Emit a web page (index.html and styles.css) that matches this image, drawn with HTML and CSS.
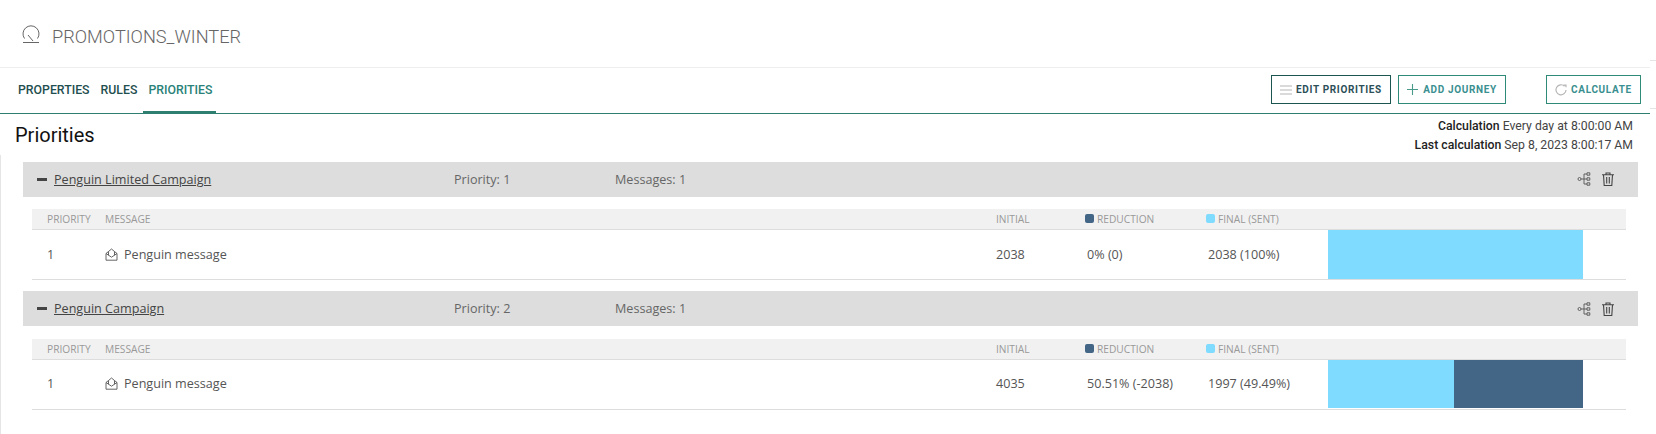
FILE: index.html
```html
<!DOCTYPE html>
<html lang="en">
<head>
    <meta charset="UTF-8">
    <title>PROMOTIONS_WINTER</title>
    <link rel="stylesheet" href="styles.css">
</head>
<body>
    <header class="title-bar">
        <svg class="title-icon" viewBox="0 0 20 20"><path d="M3.500 14.500A8 8 0 1 1 16.500 14.500"/><path d="M7 11l5 6"/><path d="M2 18.500h16"/></svg>
        <h1>PROMOTIONS_WINTER</h1>
    </header>

    <nav class="tab-bar">
        <div class="tabs">
            <a class="tab">PROPERTIES</a>
            <a class="tab">RULES</a>
            <a class="tab active">PRIORITIES</a>
        </div>
        <div class="actions">
            <button class="btn btn-dark">
                <svg viewBox="0 0 12 10"><path d="M0 1h12M0 5h12M0 9h12"/></svg>
                EDIT PRIORITIES
            </button>
            <button class="btn btn-add">
                <svg viewBox="0 0 12 12"><path d="M6 0v12M0 6h12"/></svg>
                ADD JOURNEY
            </button>
            <button class="btn btn-calc">
                <svg viewBox="0 0 12 12"><path d="M9.500 2.200A5 5 0 1 0 11 6"/><path d="M8.500 1.200h2.500v2"/></svg>
                CALCULATE
            </button>
        </div>
    </nav>

    <main>
        <div class="heading-row">
            <h2>Priorities</h2>
            <div class="calc-info">
                <div><strong>Calculation</strong> Every day at 8:00:00 AM</div>
                <div><strong>Last calculation</strong> Sep 8, 2023 8:00:17 AM</div>
            </div>
        </div>

        <div class="journey-list">
            <section class="journey">
                <div class="journey-head">
                    <span class="minus"></span>
                    <a class="journey-name">Penguin Limited Campaign</a>
                    <span class="journey-priority">Priority: 1</span>
                    <span class="journey-messages">Messages: 1</span>
                    <svg class="head-icon icon-tree" viewBox="0 0 14 14"><circle cx="2.500" cy="7" r="1.500"/><path d="M4 7h6M7 7V2h3M7 7v5h3M10 .8h2.800v2.400H10zM10 5.800h2.800v2.400H10zM10 10.800h2.800v2.400H10z"/></svg>
                    <svg class="head-icon" viewBox="0 0 14 14"><path d="M1 2.800h12M5 2.800V1h4v1.800M2.500 2.800l.7 10.700h7.600l.7-10.700M5.700 5v6.500M8.300 5v6.500"/></svg>
                </div>
                <div class="row row-head">
                    <span>PRIORITY</span>
                    <span>MESSAGE</span>
                    <span>INITIAL</span>
                    <span><i class="key key-reduction"></i>REDUCTION</span>
                    <span><i class="key key-final"></i>FINAL (SENT)</span>
                </div>
                <div class="row row-body">
                    <span>1</span>
                    <span class="message">
                        <svg viewBox="0 0 13 13"><path d="M1 5.500L3.500 3.500 6.500 1l3 2.500L12 5.500V12.200H1zM1 5.500l5.500 3.700L12 5.500M3.500 3.500v3.700M9.500 3.500v3.700"/></svg>
                        Penguin message
                    </span>
                    <span>2038</span>
                    <span class="pad">0% (0)</span>
                    <span class="pad">2038 (100%)</span>
                    <div class="bar">
                        <div class="bar-final" style="width: 100%"></div>
                    </div>
                </div>
            </section>

            <section class="journey">
                <div class="journey-head">
                    <span class="minus"></span>
                    <a class="journey-name">Penguin Campaign</a>
                    <span class="journey-priority">Priority: 2</span>
                    <span class="journey-messages">Messages: 1</span>
                    <svg class="head-icon icon-tree" viewBox="0 0 14 14"><circle cx="2.500" cy="7" r="1.500"/><path d="M4 7h6M7 7V2h3M7 7v5h3M10 .8h2.800v2.400H10zM10 5.800h2.800v2.400H10zM10 10.800h2.800v2.400H10z"/></svg>
                    <svg class="head-icon" viewBox="0 0 14 14"><path d="M1 2.800h12M5 2.800V1h4v1.800M2.500 2.800l.7 10.700h7.600l.7-10.700M5.700 5v6.500M8.300 5v6.500"/></svg>
                </div>
                <div class="row row-head">
                    <span>PRIORITY</span>
                    <span>MESSAGE</span>
                    <span>INITIAL</span>
                    <span><i class="key key-reduction"></i>REDUCTION</span>
                    <span><i class="key key-final"></i>FINAL (SENT)</span>
                </div>
                <div class="row row-body">
                    <span>1</span>
                    <span class="message">
                        <svg viewBox="0 0 13 13"><path d="M1 5.500L3.500 3.500 6.500 1l3 2.500L12 5.500V12.200H1zM1 5.500l5.500 3.700L12 5.500M3.500 3.500v3.700M9.500 3.500v3.700"/></svg>
                        Penguin message
                    </span>
                    <span>4035</span>
                    <span class="pad">50.51% (-2038)</span>
                    <span class="pad">1997 (49.49%)</span>
                    <div class="bar">
                        <div class="bar-final" style="width: 49.49%"></div>
                        <div class="bar-reduction" style="width: 50.51%"></div>
                    </div>
                </div>
            </section>
        </div>
    </main>
</body>
</html>
```

FILE: styles.css
```css
html, body {
    margin: 0;
    height: 434px;
    overflow: hidden;
    background: #fff;
}
body {
    font-family: 'Open Sans', sans-serif;
    color: #444;
}
.title-bar {
    position: relative;
    display: flex;
    align-items: center;
    height: 68px;
    padding: 6px 0 0 21px;
    border-bottom: 1px solid #eee;
    margin-right: 6px;
    box-sizing: border-box;
}
/* small stubs at the right edge of the window */
.title-bar::after, .tab-bar::after {
    content: "";
    position: absolute;
    right: -6px;
    width: 6px;
    height: 1px;
    background: #e5e5e5;
}
.title-bar::after {
    top: 60px;
}
.title-icon {
    width: 20px;
    height: 20px;
    margin-top: -6px;
    fill: none;
    stroke: #666;
    stroke-width: 1;
}
h1 {
    margin: 0 0 0 11px;
    font-family: 'Roboto', sans-serif;
    font-weight: 300;
    font-size: 18.200px;
    color: #666;
}
.tab-bar {
    position: relative;
    display: flex;
    justify-content: space-between;
    height: 47px;
    box-sizing: border-box;
    border-bottom: 1px solid #2f7f70;
    margin-right: 6px;
    margin-top: -1px;
}
.tab-bar::after {
    top: 41px;
}
.tabs {
    display: flex;
    padding-left: 18px;
}
.tab {
    font-family: 'Roboto', sans-serif;
    font-weight: 500;
    font-size: 12.300px;
    color: #1f4f4f;
    padding-top: 16px;
    margin-right: 11px;
}
.tab.active {
    color: #2a8278;
    height: 31px;
    margin: 15px 0 0 -5px;
    padding: 1px 4px 0 5px;
    box-sizing: border-box;
    border-bottom: 2px solid #2f7f70;
}
.actions {
    display: flex;
    align-items: flex-start;
    padding-top: 8px;
    padding-right: 9px;
}
.btn {
    display: flex;
    align-items: center;
    justify-content: center;
    gap: 4px;
    height: 29px;
    width: 108px;
    margin-left: 7px;
    padding: 0;
    background: #fff;
    border: 1px solid #2f8a78;
    font-family: 'Roboto', sans-serif;
    font-weight: 700;
    font-size: 10px;
    letter-spacing: .65px;
    color: #3a8f90;
}
.btn svg {
    width: 12px;
    height: 12px;
    fill: none;
    stroke: #b5b5b5;
    stroke-width: 1.200;
}
.btn-dark {
    width: 120px;
    border-color: #1d5550;
    color: #2c4f58;
}
.btn-add {
    gap: 5px;
}
.btn-add svg {
    width: 11px;
    height: 11px;
    stroke: #4a9a8c;
}
.btn-calc {
    width: 95px;
    margin-left: 40px;
}
.heading-row {
    display: flex;
    justify-content: space-between;
    height: 47.900px;
}
h2 {
    margin: 9px 0 0 15px;
    font-family: 'Roboto', sans-serif;
    font-weight: 400;
    font-size: 20px;
    color: #111;
}
.calc-info {
    font-family: 'Roboto', sans-serif;
    font-size: 12.250px;
    line-height: 19px;
    text-align: right;
    color: #444;
    padding: 3px 23px 0 0;
}
.calc-info strong {
    font-weight: 500;
    color: #222;
}
.journey-list {
    margin-top: -7px;
    padding-top: 7px;
    height: 280px;
    border-left: 1px solid #e5e5e5;
}
.journey {
    margin-bottom: 11.450px;
}
.journey-head {
    display: flex;
    align-items: center;
    height: 35px;
    margin: 0 18px 0 22px;
    background: #ddd;
    font-size: 12.600px;
    color: #666;
}
.minus {
    width: 10px;
    height: 3px;
    margin-left: 14px;
    background: #444;
}
.journey-name {
    width: 400px;
    margin-left: 7px;
    color: #444;
    text-decoration: underline;
}
.journey-priority {
    width: 161px;
}
.journey-messages {
    flex: 1;
}
.head-icon {
    width: 14px;
    height: 14px;
    margin-right: 23px;
    fill: none;
    stroke: #444;
    stroke-width: 1.100;
}
.icon-tree {
    margin-right: 10px;
    stroke: #555;
    stroke-width: .9;
}
.row {
    display: grid;
    grid-template-columns: 73px 891px 89px 121px 122px 255px 1fr;
    align-items: center;
    margin: 0 30px 0 31px;
    box-sizing: border-box;
}
.row > span:first-child {
    padding-left: 15px;
}
.row-head {
    height: 21px;
    margin-top: 12.100px;
    background: #f1f1f1;
    border-bottom: 1px solid #ddd;
    font-size: 10.200px;
    color: #999;
}
.row-body {
    height: 50px;
    padding-bottom: 2px;
    border-bottom: 1px solid #ddd;
    font-size: 12.600px;
    color: #555;
}
.pad {
    padding-left: 2px;
}
.message {
    display: flex;
    align-items: center;
    gap: 6px;
}
.message svg {
    width: 13px;
    height: 13px;
    fill: none;
    stroke: #555;
    stroke-width: .9;
}
.key {
    display: inline-block;
    width: 9px;
    height: 9px;
    margin-right: 3px;
    border-radius: 2px;
    vertical-align: -0.500px;
}
.key-reduction {
    background: #436687;
}
.key-final {
    background: #7fdbff;
}
.bar {
    display: flex;
    height: 48.600px;
    align-self: start;
}
.bar-final {
    background: #7fdbff;
}
.bar-reduction {
    background: #436687;
}
```
